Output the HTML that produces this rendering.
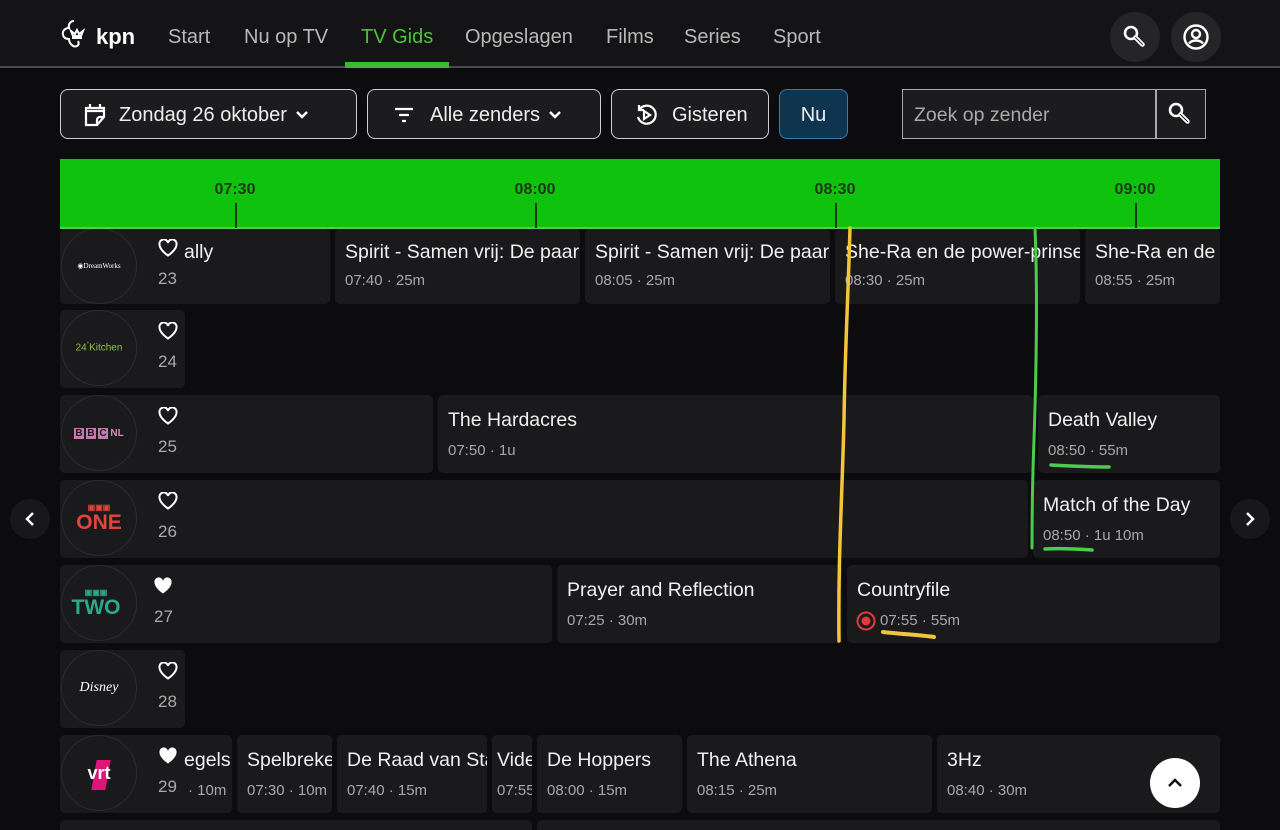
<!DOCTYPE html>
<html style="width:1280px;height:830px;overflow:hidden"><head><meta charset="utf-8"><style>
*{box-sizing:border-box;margin:0;padding:0}
body{width:1280px;height:830px;overflow:hidden;background:#0c0c0e;font-family:"Liberation Sans",sans-serif;color:#eee;position:relative}
.a{position:absolute}
.hdr{left:0;top:0;width:1280px;height:68px;background:#141416;border-bottom:2px solid #4a4a4c}
.nav{top:26px;font-size:20px;color:#b8b8b8}
.btn{position:absolute;top:89px;height:50px;border:1.5px solid #cfcfcf;border-radius:8px;background:#1c1c1e;font-size:20px;color:#eee;display:flex;align-items:center;padding-top:2px}
.c{position:absolute;background:#1a1a1c;border-radius:5px;height:78px;overflow:hidden;white-space:nowrap}
.c .t{position:absolute;left:10px;top:14px;font-size:19.5px;color:#f0f0f0}
.c .s{position:absolute;left:10px;top:47px;font-size:15px;color:#a8a8a8}
.circ{position:absolute;left:1px;top:0px;width:76px;height:76px;border-radius:50%;border:1px solid #2c2c2e;display:flex;align-items:center;justify-content:center}
.hrt{position:absolute;left:98px;top:12px}
.num{position:absolute;left:98px;top:42px;font-size:17px;color:#aaa}
.tk{position:absolute;top:22px;font-size:16px;font-weight:bold;color:#1a3a10;transform:translateX(-50%)}
.tl{position:absolute;top:44px;width:1.5px;height:25px;background:#1a3a10}
</style></head><body>
<div class="a hdr"></div>
<svg class="a" style="left:60px;top:18px" width="34" height="34" viewBox="0 0 34 34" fill="none" stroke="#fff" stroke-width="2"><path d="M14 3c-4 0-6 4-5 7-4 0-7 3-6 7 1 4 5 4 6 4 0 4 4 9 8 7 2-1 2-3 1-5"/><path d="M11 13l2 5h8l2-5-4 3-2-4-2 4z"/><path d="M12 20h10"/></svg>
<div class="a" style="left:96px;top:24px;font-size:22px;font-weight:bold;color:#fff">kpn</div>
<div class="a nav" style="left:168px">Start</div>
<div class="a nav" style="left:244px">Nu op TV</div>
<div class="a nav" style="left:361px;color:#4cc23a">TV Gids</div>
<div class="a" style="left:345px;top:62px;width:104px;height:6px;background:#3cb832"></div>
<div class="a nav" style="left:465px">Opgeslagen</div>
<div class="a nav" style="left:606px">Films</div>
<div class="a nav" style="left:684px">Series</div>
<div class="a nav" style="left:773px">Sport</div>
<div class="a" style="left:1110px;top:12px;width:50px;height:50px;border-radius:50%;background:#252527"></div>
<svg class="a" style="left:1121px;top:23px" width="28" height="28" viewBox="0 0 28 28" fill="none" stroke="#fff" stroke-width="2.6"><circle cx="10" cy="10" r="6"/><path d="M14.5 14.5l7 7" stroke-linecap="round" stroke-width="4.5"/><path d="M14.5 14.5l7 7" stroke="#252527" stroke-width="1" stroke-linecap="round"/></svg>
<div class="a" style="left:1171px;top:12px;width:50px;height:50px;border-radius:50%;background:#252527"></div>
<svg class="a" style="left:1182px;top:23px" width="28" height="28" viewBox="0 0 28 28" fill="none" stroke="#fff" stroke-width="2.4"><circle cx="14" cy="14" r="11.5"/><circle cx="14" cy="11" r="4"/><path d="M7 20.5c2-2.5 4.5-3 7-3s5 .5 7 3"/></svg>

<div class="btn" style="left:60px;width:297px"><svg style="margin:0 12px 0 22px" width="24" height="26" viewBox="0 0 24 26" fill="none" stroke="#fff" stroke-width="2.2"><path d="M7 2v4M17 2v4M3 9h18M21 15V6H3v17h11z M14 23v-5a3 3 0 013-3h4"/></svg>Zondag 26 oktober<svg style="margin-left:8px" width="14" height="10" viewBox="0 0 14 10" fill="none" stroke="#fff" stroke-width="2.5"><path d="M2 2l5 5 5-5"/></svg></div>
<div class="btn" style="left:367px;width:234px"><svg style="margin:0 16px 0 26px" width="20" height="18" viewBox="0 0 20 18" stroke="#fff" stroke-width="2.2"><path d="M1 3h18M5 9h10M8 15h4"/></svg>Alle zenders<svg style="margin-left:8px" width="14" height="10" viewBox="0 0 14 10" fill="none" stroke="#fff" stroke-width="2.5"><path d="M2 2l5 5 5-5"/></svg></div>
<div class="btn" style="left:611px;width:158px"><svg style="margin:0 14px 0 22px" width="24" height="24" viewBox="0 0 24 24" fill="none" stroke="#fff" stroke-width="2.2"><path d="M5 7a9 9 0 1 1-1 7"/><path d="M5 2v5h5"/><path d="M10 8l6 4-6 4z"/></svg>Gisteren</div>
<div class="btn" style="left:779px;width:69px;background:#0e3450;border-color:#3b7aa8;justify-content:center">Nu</div>
<div class="a" style="left:902px;top:89px;width:304px;height:50px;border:1.5px solid #aaa;background:#1c1c1e"></div>
<div class="a" style="left:1155px;top:89px;width:1.5px;height:50px;background:#aaa"></div>
<div class="a" style="left:914px;top:104px;font-size:19.5px;color:#aaa">Zoek op zender</div>
<svg class="a" style="left:1166px;top:100px" width="28" height="28" viewBox="0 0 28 28" fill="none" stroke="#fff" stroke-width="2.6"><circle cx="10" cy="10" r="6"/><path d="M14.5 14.5l7 7" stroke-linecap="round" stroke-width="4.5"/><path d="M14.5 14.5l7 7" stroke="#1c1c1e" stroke-width="1" stroke-linecap="round"/></svg>

<div class="a" style="left:60px;top:159px;width:1160px;height:70px;background:#0ec20e;border-bottom:2px solid #4ad24a">
<div class="tk" style="left:175px">07:30</div><div class="tl" style="left:175px"></div>
<div class="tk" style="left:475px">08:00</div><div class="tl" style="left:475px"></div>
<div class="tk" style="left:775px">08:30</div><div class="tl" style="left:775px"></div>
<div class="tk" style="left:1075px">09:00</div><div class="tl" style="left:1075px"></div>
</div>

<div class="c" style="left:60px;top:229px;width:270px;height:75px"><div class="circ" style="top:-1px"><span style="font-size:7px;color:#fff;font-family:'Liberation Serif',serif">◉DreamWorks</span></div><svg class="hrt" style="top:10px" width="20" height="18" viewBox="0 0 20 18"><path d="M10 16.5S1.5 11 1.5 5.5A4 4 0 0 1 10 4a4 4 0 0 1 8.5 1.5C18.5 11 10 16.5 10 16.5z" fill="none" stroke="#fff" stroke-width="2"/></svg><div class="t" style="left:124px;top:12px">ally</div><div class="num" style="top:40px">23</div></div>
<div class="c" style="left:335px;top:229px;width:245px;height:75px"><div class="t" style="top:12px">Spirit - Samen vrij: De paar</div><div class="s" style="top:43px">07:40 · 25m</div></div>
<div class="c" style="left:585px;top:229px;width:245px;height:75px"><div class="t" style="top:12px">Spirit - Samen vrij: De paar</div><div class="s" style="top:43px">08:05 · 25m</div></div>
<div class="c" style="left:835px;top:229px;width:245px;height:75px"><div class="t" style="top:12px">She-Ra en de power-prinsessen</div><div class="s" style="top:43px">08:30 · 25m</div></div>
<div class="c" style="left:1085px;top:229px;width:135px;height:75px"><div class="t" style="top:12px">She-Ra en de</div><div class="s" style="top:43px">08:55 · 25m</div></div>

<div class="c" style="left:60px;top:310px;width:125px"><div class="circ"><span style="font-size:10px;color:#8bc34a">24<sup style="font-size:6px">°</sup>Kitchen</span></div><svg class="hrt" width="20" height="18" viewBox="0 0 20 18"><path d="M10 16.5S1.5 11 1.5 5.5A4 4 0 0 1 10 4a4 4 0 0 1 8.5 1.5C18.5 11 10 16.5 10 16.5z" fill="none" stroke="#fff" stroke-width="2"/></svg><div class="num">24</div></div>

<div class="c" style="left:60px;top:395px;width:373px"><div class="circ"><span style="font-size:10px;font-weight:bold;color:#d58cc0"><span style="background:#c77ab0;color:#1a1a1c;padding:0 1px">B</span> <span style="background:#c77ab0;color:#1a1a1c;padding:0 1px">B</span> <span style="background:#c77ab0;color:#1a1a1c;padding:0 1px">C</span> NL</span></div><svg class="hrt" width="20" height="18" viewBox="0 0 20 18"><path d="M10 16.5S1.5 11 1.5 5.5A4 4 0 0 1 10 4a4 4 0 0 1 8.5 1.5C18.5 11 10 16.5 10 16.5z" fill="none" stroke="#fff" stroke-width="2"/></svg><div class="num">25</div></div>
<div class="c" style="left:438px;top:395px;width:595px"><div class="t">The Hardacres</div><div class="s">07:50 · 1u</div></div>
<div class="c" style="left:1038px;top:395px;width:182px"><div class="t">Death Valley</div><div class="s">08:50 · 55m</div></div>

<div class="c" style="left:60px;top:480px;width:968px"><div class="circ"><div style="text-align:center;color:#e0453a;font-weight:bold;line-height:1"><div style="font-size:8px">▣▣▣</div><div style="font-size:21px">ONE</div></div></div><svg class="hrt" width="20" height="18" viewBox="0 0 20 18"><path d="M10 16.5S1.5 11 1.5 5.5A4 4 0 0 1 10 4a4 4 0 0 1 8.5 1.5C18.5 11 10 16.5 10 16.5z" fill="none" stroke="#fff" stroke-width="2"/></svg><div class="num">26</div></div>
<div class="c" style="left:1033px;top:480px;width:187px"><div class="t">Match of the Day</div><div class="s">08:50 · 1u 10m</div></div>

<div class="c" style="left:60px;top:565px;width:492px"><div class="circ"><div style="text-align:center;color:#2fa88a;font-weight:bold;line-height:1;margin-left:-6px"><div style="font-size:8px">▣▣▣</div><div style="font-size:21px">TWO</div></div></div><svg class="hrt" style="left:93px" width="20" height="18" viewBox="0 0 20 18"><path d="M10 16.5S1.5 11 1.5 5.5A4 4 0 0 1 10 4a4 4 0 0 1 8.5 1.5C18.5 11 10 16.5 10 16.5z" fill="#fff"/></svg><div class="num" style="left:94px">27</div></div>
<div class="c" style="left:557px;top:565px;width:285px"><div class="t">Prayer and Reflection</div><div class="s">07:25 · 30m</div></div>
<div class="c" style="left:847px;top:565px;width:373px"><div class="t">Countryfile</div><div class="s" style="left:33px">07:55 · 55m</div><svg class="a" style="left:9px;top:46px" width="20" height="20" viewBox="0 0 20 20" fill="none" stroke="#e03a3a" stroke-width="2"><circle cx="10" cy="10" r="8.5"/><circle cx="10" cy="10" r="3.5" fill="#e03a3a"/></svg></div>

<div class="c" style="left:60px;top:650px;width:125px"><div class="circ"><span style="font-size:14px;color:#fff;font-family:'Liberation Serif',serif;font-style:italic">Disney</span></div><svg class="hrt" width="20" height="18" viewBox="0 0 20 18"><path d="M10 16.5S1.5 11 1.5 5.5A4 4 0 0 1 10 4a4 4 0 0 1 8.5 1.5C18.5 11 10 16.5 10 16.5z" fill="none" stroke="#fff" stroke-width="2"/></svg><div class="num">28</div></div>

<div class="c" style="left:60px;top:735px;width:172px"><div class="circ"><div style="position:absolute;left:32px;top:24px;width:14px;height:30px;background:#e0157a;transform:skewX(-10deg)"></div><span style="position:relative;font-size:18px;font-weight:bold;color:#fff">vrt</span></div><svg class="hrt" width="20" height="18" viewBox="0 0 20 18"><path d="M10 16.5S1.5 11 1.5 5.5A4 4 0 0 1 10 4a4 4 0 0 1 8.5 1.5C18.5 11 10 16.5 10 16.5z" fill="#fff"/></svg><div class="t" style="left:124px">egels</div><div class="num">29</div><div class="s" style="left:128px">· 10m</div></div>
<div class="c" style="left:237px;top:735px;width:95px"><div class="t">Spelbreker</div><div class="s">07:30 · 10m</div></div>
<div class="c" style="left:337px;top:735px;width:150px"><div class="t">De Raad van State</div><div class="s">07:40 · 15m</div></div>
<div class="c" style="left:492px;top:735px;width:40px"><div class="t" style="left:5px">Video</div><div class="s" style="left:5px">07:55</div></div>
<div class="c" style="left:537px;top:735px;width:145px"><div class="t">De Hoppers</div><div class="s">08:00 · 15m</div></div>
<div class="c" style="left:687px;top:735px;width:245px"><div class="t">The Athena</div><div class="s">08:15 · 25m</div></div>
<div class="c" style="left:937px;top:735px;width:283px"><div class="t">3Hz</div><div class="s">08:40 · 30m</div></div>

<div class="c" style="left:60px;top:820px;width:472px;height:10px;border-radius:5px 5px 0 0"></div>
<div class="c" style="left:537px;top:820px;width:683px;height:10px;border-radius:5px 5px 0 0"></div>

<div class="a" style="left:1150px;top:758px;width:50px;height:50px;border-radius:50%;background:#fff"></div>
<svg class="a" style="left:1165px;top:773px" width="20" height="20" viewBox="0 0 20 20" fill="none" stroke="#111" stroke-width="2.5"><path d="M4 13l6-6 6 6"/></svg>
<div class="a" style="left:10px;top:499px;width:40px;height:40px;border-radius:50%;background:#18181a"></div>
<svg class="a" style="left:20px;top:509px" width="20" height="20" viewBox="0 0 20 20" fill="none" stroke="#fff" stroke-width="2.5"><path d="M13 4l-6 6 6 6"/></svg>
<div class="a" style="left:1230px;top:499px;width:40px;height:40px;border-radius:50%;background:#18181a"></div>
<svg class="a" style="left:1240px;top:509px" width="20" height="20" viewBox="0 0 20 20" fill="none" stroke="#fff" stroke-width="2.5"><path d="M7 4l6 6-6 6"/></svg>

<svg class="a" style="left:0;top:0" width="1280" height="830" fill="none" stroke-linecap="round">
<path d="M850 228 C848 300 845 350 844 420 C842 500 838 560 839 641" stroke="#f2c53a" stroke-width="3.5"/>
<path d="M883 632 C900 634 920 635 934 637" stroke="#f2c53a" stroke-width="4"/>
<path d="M1035 228 C1038 300 1036 380 1034 440 C1032 490 1032 520 1032 548" stroke="#4ccc4c" stroke-width="3"/>
<path d="M1051 465 C1070 466 1090 467 1109 467" stroke="#4ccc4c" stroke-width="3.5"/>
<path d="M1045 549 C1060 548 1078 549 1092 550" stroke="#4ccc4c" stroke-width="3.5"/>
</svg>
</body></html>
